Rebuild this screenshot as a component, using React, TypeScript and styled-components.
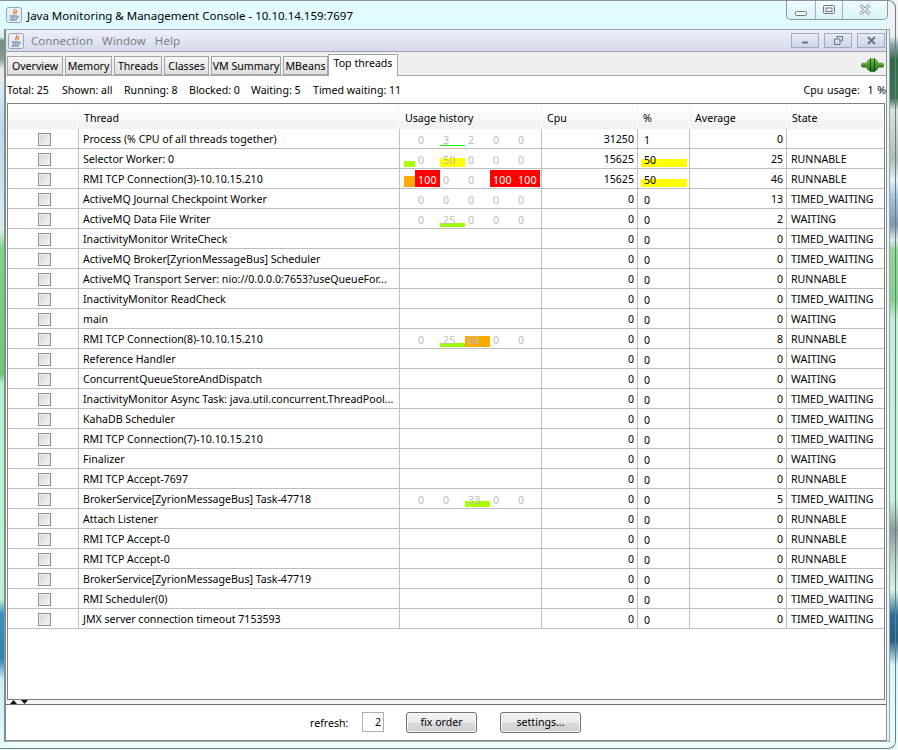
import React from "react";
import styled, { createGlobalStyle } from "styled-components";

const FONT = `"Noto Sans", "Liberation Sans", Arial, sans-serif`;
const SIZE = "10.6px";

const Global = createGlobalStyle`
  html, body { margin: 0; padding: 0; width: 898px; height: 750px; overflow: hidden; background: #fff; }
  * { box-sizing: border-box; }
`;

const Desktop = styled.div`
  width: 898px; height: 750px; overflow: hidden; position: relative;
  background: linear-gradient(180deg, #f1f3f2 0, #eef1f0 36px, #8fa5ad 45px, #2f6a46 60px, #3d7350 98px, #d9e2dc 110px, #aeb9ba 160px, #e6f3f6 180px, #a9c9e2 195px, #7f97ae 225px, #dfe7e8 240px, #8ed695 250px, #86d08f 300px, #c3f0d4 320px, #c6f2d8 500px, #8d9a9c 530px, #b9d0cc 560px, #d5f5e6 590px, #2a6d94 615px, #235d82 640px, #d8f5f8 665px, #ecfdfd 750px);
`;

const Window = styled.div`
  width: 896px; height: 749px;
  border: 1px solid #6f7d86; border-top-color: #8a9298; border-left: none;
  border-radius: 0 8px 8px 0;
  display: flex; flex-direction: column; overflow: hidden;
`;

const TitleBar = styled.div`
  height: 28px; flex: none; display: flex; align-items: center;
  background: linear-gradient(180deg, #e4fbfd, #dffbfe);
  padding-left: 6px; margin-right: 7px;
  font: 11.5px ${FONT}; color: #000;
`;

const TitleText = styled.span`margin-left: 5px; white-space: nowrap;`;

const CaptionGroup = styled.div`
  margin-left: auto; align-self: flex-start; margin-top: -1px; margin-right: 0;
  width: 102px; height: 20px; display: flex;
  border: 1px solid #8b979e; border-top: none; border-radius: 0 0 5px 5px;
  background: linear-gradient(180deg, #f2fcfd, #d9f4f8);
`;

const CaptionBtn = styled.div<{ $w: number }>`
  width: ${p => p.$w}px; display: flex; align-items: center; justify-content: center;
  & + & { border-left: 1px solid #a3b1b8; }
`;

const Body = styled.div`flex: 1; display: flex; min-height: 0;`;

const LeftGlass = styled.div`
  width: 4px; flex: none;
  background: linear-gradient(180deg, #dff6f8 0, #d9eeee 8px, #6f8a7c 12px, #88a090 30px, #e7eeee 40px, #cfe5f2 70px, #bcd8ea 100px, #d9edf0 200px, #7fd48a 220px, #70c67e 345px, #b6efcf 355px, #bff0d8 570px, #3b90bf 585px, #2f85b5 630px, #cdeef5 650px, #e4fafc 721px);
`;

const RightGlass = styled.div`flex: 1;`;

const Frame = styled.div`
  width: 886px; height: 713px; flex: none;
  border: 1px solid #9aa3a8; border-left: 2px solid #858c90; border-bottom-color: #a0a8ab;
  background: #e9f4f6;
  display: flex; flex-direction: column;
`;

const Inner = styled.div`
  width: 881px; height: 711px; flex: none; background: #fff;
  border-right: 1px solid #8b9296; border-bottom: 1px solid #80878b;
  display: flex; flex-direction: column;
`;

const MenuBar = styled.div`
  height: 22px; flex: none; display: flex; align-items: center;
  padding-left: 2px;
  background: linear-gradient(180deg, #eef0f9 0, #d5daec 100%);
  border-bottom: 1px solid #9aa1a8;
  font: 11.4px ${FONT}; color: #7b7f88;
`;

const MenuItem = styled.span<{ $ml: number }>`margin-left: ${p => p.$ml}px; letter-spacing: 0.1px;`;

const MdiBtn = styled.div`
  width: 28px; height: 15px; margin-left: 5px;
  border: 1px solid #a3acba;
  background: linear-gradient(180deg, #e8ebf6, #cdd5e8);
  display: flex; align-items: center; justify-content: center;
`;

const MdiGroup = styled.div`margin-left: auto; margin-right: 1px; display: flex; margin-top: -1px;`;

const TabStrip = styled.div`
  height: 24px; flex: none; display: flex; align-items: flex-end;
  background: #f0f0f0; padding-left: 1px; padding-right: 1px;
  border-bottom: 1px solid #a9a9a9;
`;

const Tab = styled.div<{ $w: number; $gap: number; $active?: boolean }>`
  width: ${p => p.$w}px; margin-left: ${p => p.$gap}px;
  height: ${p => (p.$active ? 22 : 19)}px;
  margin-bottom: ${p => (p.$active ? -1 : 0)}px;
  position: relative;
  border: 1px solid #a5a5a5; border-bottom: ${p => (p.$active ? "none" : "1px solid #a5a5a5")};
  background: ${p => (p.$active ? "#fff" : "linear-gradient(180deg, #f7f7f7, #dedede)")};
  font: ${SIZE} ${FONT}; color: #000; text-align: center; line-height: ${p => (p.$active ? 17 : 18)}px;
  white-space: nowrap;
`;

const Plug = styled.svg`margin-left: auto; margin-bottom: 3px; margin-right: 1px;`;

const Status = styled.div`
  height: 27px; flex: none; display: flex; align-items: center; padding: 1px 0 0 1px;
  font: ${SIZE} ${FONT}; color: #000; white-space: nowrap;
`;

const Stat = styled.span<{ $w: number }>`width: ${p => p.$w}px; flex: none;`;
const CpuUsage = styled.span`margin-left: auto; word-spacing: 1px;`;

const Table = styled.div`
  margin-left: 1px; width: 878px; height: 597px; flex: none;
  border: 1px solid #7f7f7f; background: #fff; overflow: hidden;
`;

const COLS = "71px 321px 142px 96px 52px 97px 97px";

const HeadRow = styled.div`
  display: grid; grid-template-columns: ${COLS}; height: 25px;
  font: ${SIZE} ${FONT}; color: #000;
`;

const HeadCell = styled.div`
  padding: 1px 0 0 5px; display: flex; align-items: center;
  border-right: 2px solid #f8f8f8; border-top: 1px solid #fff;
  background: linear-gradient(180deg, #fff 0, #f1f1f1 100%);
  &:last-child { border-right: none; margin-right: 1px; }
`;

const Row = styled.div`
  display: grid; grid-template-columns: ${COLS}; height: 20px;
  border-bottom: 1px solid #bfbfbf;
  font: ${SIZE} ${FONT}; color: #000; white-space: nowrap;
`;

const Cell = styled.div<{ $right?: boolean; $pl?: number; $pr?: number }>`
  display: flex; align-items: center;
  justify-content: ${p => (p.$right ? "flex-end" : "flex-start")};
  padding-left: ${p => p.$pl ?? 0}px; padding-right: ${p => p.$pr ?? 0}px;
  border-right: 1px solid #bfbfbf; overflow: hidden; min-width: 0;
  &:last-child { border-right: none; }
`;

const CheckCell = styled(Cell)`justify-content: center; padding: 1px 0 0 2px;`;

const Check = styled.input.attrs({ type: "checkbox", readOnly: true })`
  appearance: none; -webkit-appearance: none; margin: 0; width: 13px; height: 13px;
  border: 1px solid #8e8f8f; border-radius: 0;
  background: linear-gradient(135deg, #d4d4d4, #f6f6f6);
  box-shadow: inset 0 0 0 1px #eee;
`;

const PctCell = styled.div`
  position: relative; display: flex; align-items: center; padding: 3px 0 0 6px;
  border-right: 1px solid #bfbfbf; min-width: 0;
`;

const PctBar = styled.div<{ $pct: number }>`
  position: absolute; left: 3px; bottom: 1px; height: 8px; width: 46px;
  display: ${p => (p.$pct ? "block" : "none")};
  background: #ffff00;
`;

const PctValue = styled.span`position: relative;`;

const Usage = styled.div`
  display: flex; padding: 0 0 0 4px; border-right: 1px solid #bfbfbf; min-width: 0;
`;

const Lead = styled.div<{ $h: number; $c: string }>`
  width: 11px; flex: none; height: 100%; padding-bottom: 1px;
  background: linear-gradient(${p => p.$c}, ${p => p.$c}) no-repeat 0 calc(100% - 1px) / 100% ${p => p.$h}px;
`;

const Slot = styled.div<{ $h: number; $c: string; $light?: boolean; $u?: number }>`
  width: 25px; flex: none; height: 100%; padding: 2px 0 0 3px;
  color: ${p => (p.$light ? "#fff" : "#bdbdbd")}; letter-spacing: 0.2px;
  display: flex; align-items: center;
  background: linear-gradient(${p => p.$c}, ${p => p.$c}) no-repeat 0 calc(100% - ${p => p.$u ?? 1}px) / 100% ${p => p.$h}px;
`;

const Splitter = styled.div`
  height: 5px; flex: none; padding-left: 4px; display: flex; gap: 4px; align-items: flex-end;
  border-bottom: 1px solid #6e6e6e; background: #f4f4f4;
`;

const Footer = styled.div`
  height: 35px; flex: none; display: flex; align-items: flex-start; padding: 7px 0 0 304px;
  background: #fff; font: ${SIZE} ${FONT}; color: #000;
`;

const FootLabel = styled.span`width: 52px; height: 21px; display: flex; align-items: center;`;

const NumBox = styled.div`
  width: 22px; height: 20px; border: 1px solid #adadad; background: #fff;
  display: flex; align-items: center; justify-content: flex-end; padding-right: 2px;
`;

const Btn = styled.button<{ $w: number; $ml: number }>`
  width: ${p => p.$w}px; margin-left: ${p => p.$ml}px; height: 21px; padding: 0 0 2px;
  border: 1px solid #707070; border-radius: 3px;
  background: linear-gradient(180deg, #f2f2f2 0, #ebebeb 48%, #dbdbdb 52%, #cfcfcf 100%);
  box-shadow: inset 0 0 0 1px #f8f8f8;
  font: ${SIZE} ${FONT}; color: #000;
`;

const JavaIcon = () => (
  <svg width="16" height="16" viewBox="0 0 16 16">
    <rect x="0.5" y="0.5" width="15" height="15" rx="2" fill="#e9eef5" stroke="#9aa4b2" />
    <path d="M8.5 2 C10 4 6.5 5 8 7.5 M10.5 3.5 C11 5 9.5 5.5 9.8 7" fill="none" stroke="#e2761c" strokeWidth="1.3" />
    <path d="M3.5 9 H10.5 M4.5 11 H9.5 M3.5 13 H11 M10.5 9 C13 8.5 13 11.5 10 11" fill="none" stroke="#4a6f9c" strokeWidth="1" />
  </svg>
);

const Sp = ["0", "0", "0", "0", "0"];
type Seg = { t: string; h?: number; c?: string; light?: boolean; u?: number };
type RowD = { name: string; cpu: number; pct: number; avg: number; state: string; lead?: [number, string]; usage?: Seg[] };

const G = "#99ff00";
const L = "#aaff00";
const O = "#ffaa00";
const zeros = (): Seg[] => Sp.map(t => ({ t }));

const rows: RowD[] = [
  { name: "Process (% CPU of all threads together)", cpu: 31250, pct: 1, avg: 0, state: "", usage: [{ t: "0" }, { t: "3", h: 1, c: "#00ff00", u: 2 }, { t: "2" }, { t: "0" }, { t: "0" }] },
  { name: "Selector Worker: 0", cpu: 15625, pct: 50, avg: 25, state: "RUNNABLE", lead: [6, L], usage: [{ t: "0" }, { t: "50", h: 9, c: "#ffff00" }, { t: "0" }, { t: "0" }, { t: "0" }] },
  { name: "RMI TCP Connection(3)-10.10.15.210", cpu: 15625, pct: 50, avg: 46, state: "RUNNABLE", lead: [11, O], usage: [{ t: "100", h: 17, c: "#ff0000", light: true }, { t: "0" }, { t: "0" }, { t: "100", h: 17, c: "#ff0000", light: true }, { t: "100", h: 17, c: "#ff0000", light: true }] },
  { name: "ActiveMQ Journal Checkpoint Worker", cpu: 0, pct: 0, avg: 13, state: "TIMED_WAITING", usage: zeros() },
  { name: "ActiveMQ Data File Writer", cpu: 0, pct: 0, avg: 2, state: "WAITING", usage: [{ t: "0" }, { t: "25", h: 4, c: G }, { t: "0" }, { t: "0" }, { t: "0" }] },
  { name: "InactivityMonitor WriteCheck", cpu: 0, pct: 0, avg: 0, state: "TIMED_WAITING" },
  { name: "ActiveMQ Broker[ZyrionMessageBus] Scheduler", cpu: 0, pct: 0, avg: 0, state: "TIMED_WAITING" },
  { name: "ActiveMQ Transport Server: nio://0.0.0.0:7653?useQueueFor...", cpu: 0, pct: 0, avg: 0, state: "RUNNABLE" },
  { name: "InactivityMonitor ReadCheck", cpu: 0, pct: 0, avg: 0, state: "TIMED_WAITING" },
  { name: "main", cpu: 0, pct: 0, avg: 0, state: "WAITING" },
  { name: "RMI TCP Connection(8)-10.10.15.210", cpu: 0, pct: 0, avg: 8, state: "RUNNABLE", usage: [{ t: "0" }, { t: "25", h: 4, c: G }, { t: "66", h: 11, c: O }, { t: "0" }, { t: "0" }] },
  { name: "Reference Handler", cpu: 0, pct: 0, avg: 0, state: "WAITING" },
  { name: "ConcurrentQueueStoreAndDispatch", cpu: 0, pct: 0, avg: 0, state: "WAITING" },
  { name: "InactivityMonitor Async Task: java.util.concurrent.ThreadPool...", cpu: 0, pct: 0, avg: 0, state: "TIMED_WAITING" },
  { name: "KahaDB Scheduler", cpu: 0, pct: 0, avg: 0, state: "TIMED_WAITING" },
  { name: "RMI TCP Connection(7)-10.10.15.210", cpu: 0, pct: 0, avg: 0, state: "TIMED_WAITING" },
  { name: "Finalizer", cpu: 0, pct: 0, avg: 0, state: "WAITING" },
  { name: "RMI TCP Accept-7697", cpu: 0, pct: 0, avg: 0, state: "RUNNABLE" },
  { name: "BrokerService[ZyrionMessageBus] Task-47718", cpu: 0, pct: 0, avg: 5, state: "TIMED_WAITING", usage: [{ t: "0" }, { t: "0" }, { t: "33", h: 6, c: L }, { t: "0" }, { t: "0" }] },
  { name: "Attach Listener", cpu: 0, pct: 0, avg: 0, state: "RUNNABLE" },
  { name: "RMI TCP Accept-0", cpu: 0, pct: 0, avg: 0, state: "RUNNABLE" },
  { name: "RMI TCP Accept-0", cpu: 0, pct: 0, avg: 0, state: "RUNNABLE" },
  { name: "BrokerService[ZyrionMessageBus] Task-47719", cpu: 0, pct: 0, avg: 0, state: "TIMED_WAITING" },
  { name: "RMI Scheduler(0)", cpu: 0, pct: 0, avg: 0, state: "TIMED_WAITING" },
  { name: "JMX server connection timeout 7153593", cpu: 0, pct: 0, avg: 0, state: "TIMED_WAITING" },
];

const tabs = [
  { t: "Overview", w: 56, g: 0 },
  { t: "Memory", w: 47, g: 2 },
  { t: "Threads", w: 48, g: 2 },
  { t: "Classes", w: 45, g: 2 },
  { t: "VM Summary", w: 70, g: 2 },
  { t: "MBeans", w: 45, g: 2 },
  { t: "Top threads", w: 70, g: 0, active: true },
];

const stats = [
  { t: "Total: 25", w: 55 },
  { t: "Shown: all", w: 62 },
  { t: "Running: 8", w: 65 },
  { t: "Blocked: 0", w: 62 },
  { t: "Waiting: 5", w: 62 },
  { t: "Timed waiting: 11", w: 110 },
];

const heads = ["", "Thread", "Usage history", "Cpu", "%", "Average", "State"];

export default function App() {
  return (
    <Desktop>
      <Global />
      <Window>
        <TitleBar>
          <JavaIcon />
          <TitleText>Java Monitoring &amp; Management Console - 10.10.14.159:7697</TitleText>
          <CaptionGroup>
            <CaptionBtn $w={28}>
              <svg width="12" height="6" viewBox="0 0 12 6" style={{ marginTop: 6 }}><rect x="0.5" y="1.5" width="11" height="4" rx="1" fill="#f4f6f6" stroke="#6f7a80" /></svg>
            </CaptionBtn>
            <CaptionBtn $w={27}>
              <svg width="12" height="10" viewBox="0 0 12 10"><rect x="0.5" y="0.5" width="11" height="8" rx="1" fill="#eef3f4" stroke="#6f7a80" /><rect x="3" y="3" width="6" height="3.5" fill="none" stroke="#6f7a80" /></svg>
            </CaptionBtn>
            <CaptionBtn $w={45}>
              <svg width="12" height="11" viewBox="0 0 12 11"><path d="M1.5 1 L10.5 10 M10.5 1 L1.5 10" stroke="#7b868c" strokeWidth="3" /><path d="M1.5 1 L10.5 10 M10.5 1 L1.5 10" stroke="#f2f6f7" strokeWidth="1.4" /></svg>
            </CaptionBtn>
          </CaptionGroup>
        </TitleBar>
        <Body>
          <LeftGlass />
          <Frame>
            <Inner>
              <MenuBar>
                <JavaIcon />
                <MenuItem $ml={7}>Connection</MenuItem>
                <MenuItem $ml={9}>Window</MenuItem>
                <MenuItem $ml={9}>Help</MenuItem>
                <MdiGroup>
                  <MdiBtn>
                    <svg width="8" height="8" viewBox="0 0 8 8"><rect x="1" y="5.5" width="6" height="2" fill="#6c7480" /></svg>
                  </MdiBtn>
                  <MdiBtn>
                    <svg width="9" height="9" viewBox="0 0 9 9"><path d="M3 2.5 V0.5 H8.5 V5 H6.5 M0.5 3 H6 V8.5 H0.5 Z" fill="none" stroke="#6c7480" /></svg>
                  </MdiBtn>
                  <MdiBtn>
                    <svg width="9" height="9" viewBox="0 0 9 9"><path d="M1 1 L8 8 M8 1 L1 8" stroke="#6c7480" strokeWidth="2" /></svg>
                  </MdiBtn>
                </MdiGroup>
              </MenuBar>
              <TabStrip>
                {tabs.map(t => (
                  <Tab key={t.t} $w={t.w} $gap={t.g} $active={t.active}>{t.t}</Tab>
                ))}
                <Plug width="23" height="14" viewBox="0 0 23 14">
                  <defs>
                    <linearGradient id="pl" x1="0" y1="0" x2="0" y2="1">
                      <stop offset="0" stopColor="#7fc24a" />
                      <stop offset="1" stopColor="#1c6a16" />
                    </linearGradient>
                  </defs>
                  <rect x="0" y="4.5" width="23" height="5" rx="2" fill="url(#pl)" />
                  <ellipse cx="11.5" cy="7" rx="6.5" ry="7" fill="url(#pl)" />
                  <path d="M9.5 0.5 V13.5 M13.5 0.5 V13.5" stroke="#0f4a10" strokeWidth="1" />
                </Plug>
              </TabStrip>
              <Status>
                {stats.map(s => <Stat key={s.t} $w={s.w}>{s.t}</Stat>)}
                <CpuUsage>Cpu usage:&nbsp; 1 %</CpuUsage>
              </Status>
              <Table>
                <HeadRow>
                  {heads.map((h, i) => <HeadCell key={i}>{h}</HeadCell>)}
                </HeadRow>
                {rows.map((r, i) => (
                  <Row key={i}>
                    <CheckCell><Check /></CheckCell>
                    <Cell $pl={4}>{r.name}</Cell>
                    <Usage>
                      {r.usage && <Lead $h={r.lead ? r.lead[0] : 0} $c={r.lead ? r.lead[1] : "transparent"} />}
                      {r.usage && r.usage.map((s, j) => (
                        <Slot key={j} $h={s.h ?? 0} $c={s.c ?? "transparent"} $light={s.light} $u={s.u}>{s.t}</Slot>
                      ))}
                    </Usage>
                    <Cell $right $pr={3}>{r.cpu}</Cell>
                    <PctCell>
                      <PctBar $pct={r.pct >= 50 ? r.pct : 0} />
                      <PctValue>{r.pct}</PctValue>
                    </PctCell>
                    <Cell $right $pr={3}>{r.avg}</Cell>
                    <Cell $pl={4}>{r.state}</Cell>
                  </Row>
                ))}
              </Table>
              <Splitter>
                <svg width="7" height="4" viewBox="0 0 7 4"><path d="M0 4 L3.5 0 L7 4 Z" fill="#111" /></svg>
                <svg width="7" height="4" viewBox="0 0 7 4"><path d="M0 0 L7 0 L3.5 4 Z" fill="#111" /></svg>
              </Splitter>
              <Footer>
                <FootLabel>refresh:</FootLabel>
                <NumBox>2</NumBox>
                <Btn $w={71} $ml={22}>fix order</Btn>
                <Btn $w={81} $ml={23}>settings...</Btn>
              </Footer>
            </Inner>
          </Frame>
          <RightGlass />
        </Body>
      </Window>
    </Desktop>
  );
}
